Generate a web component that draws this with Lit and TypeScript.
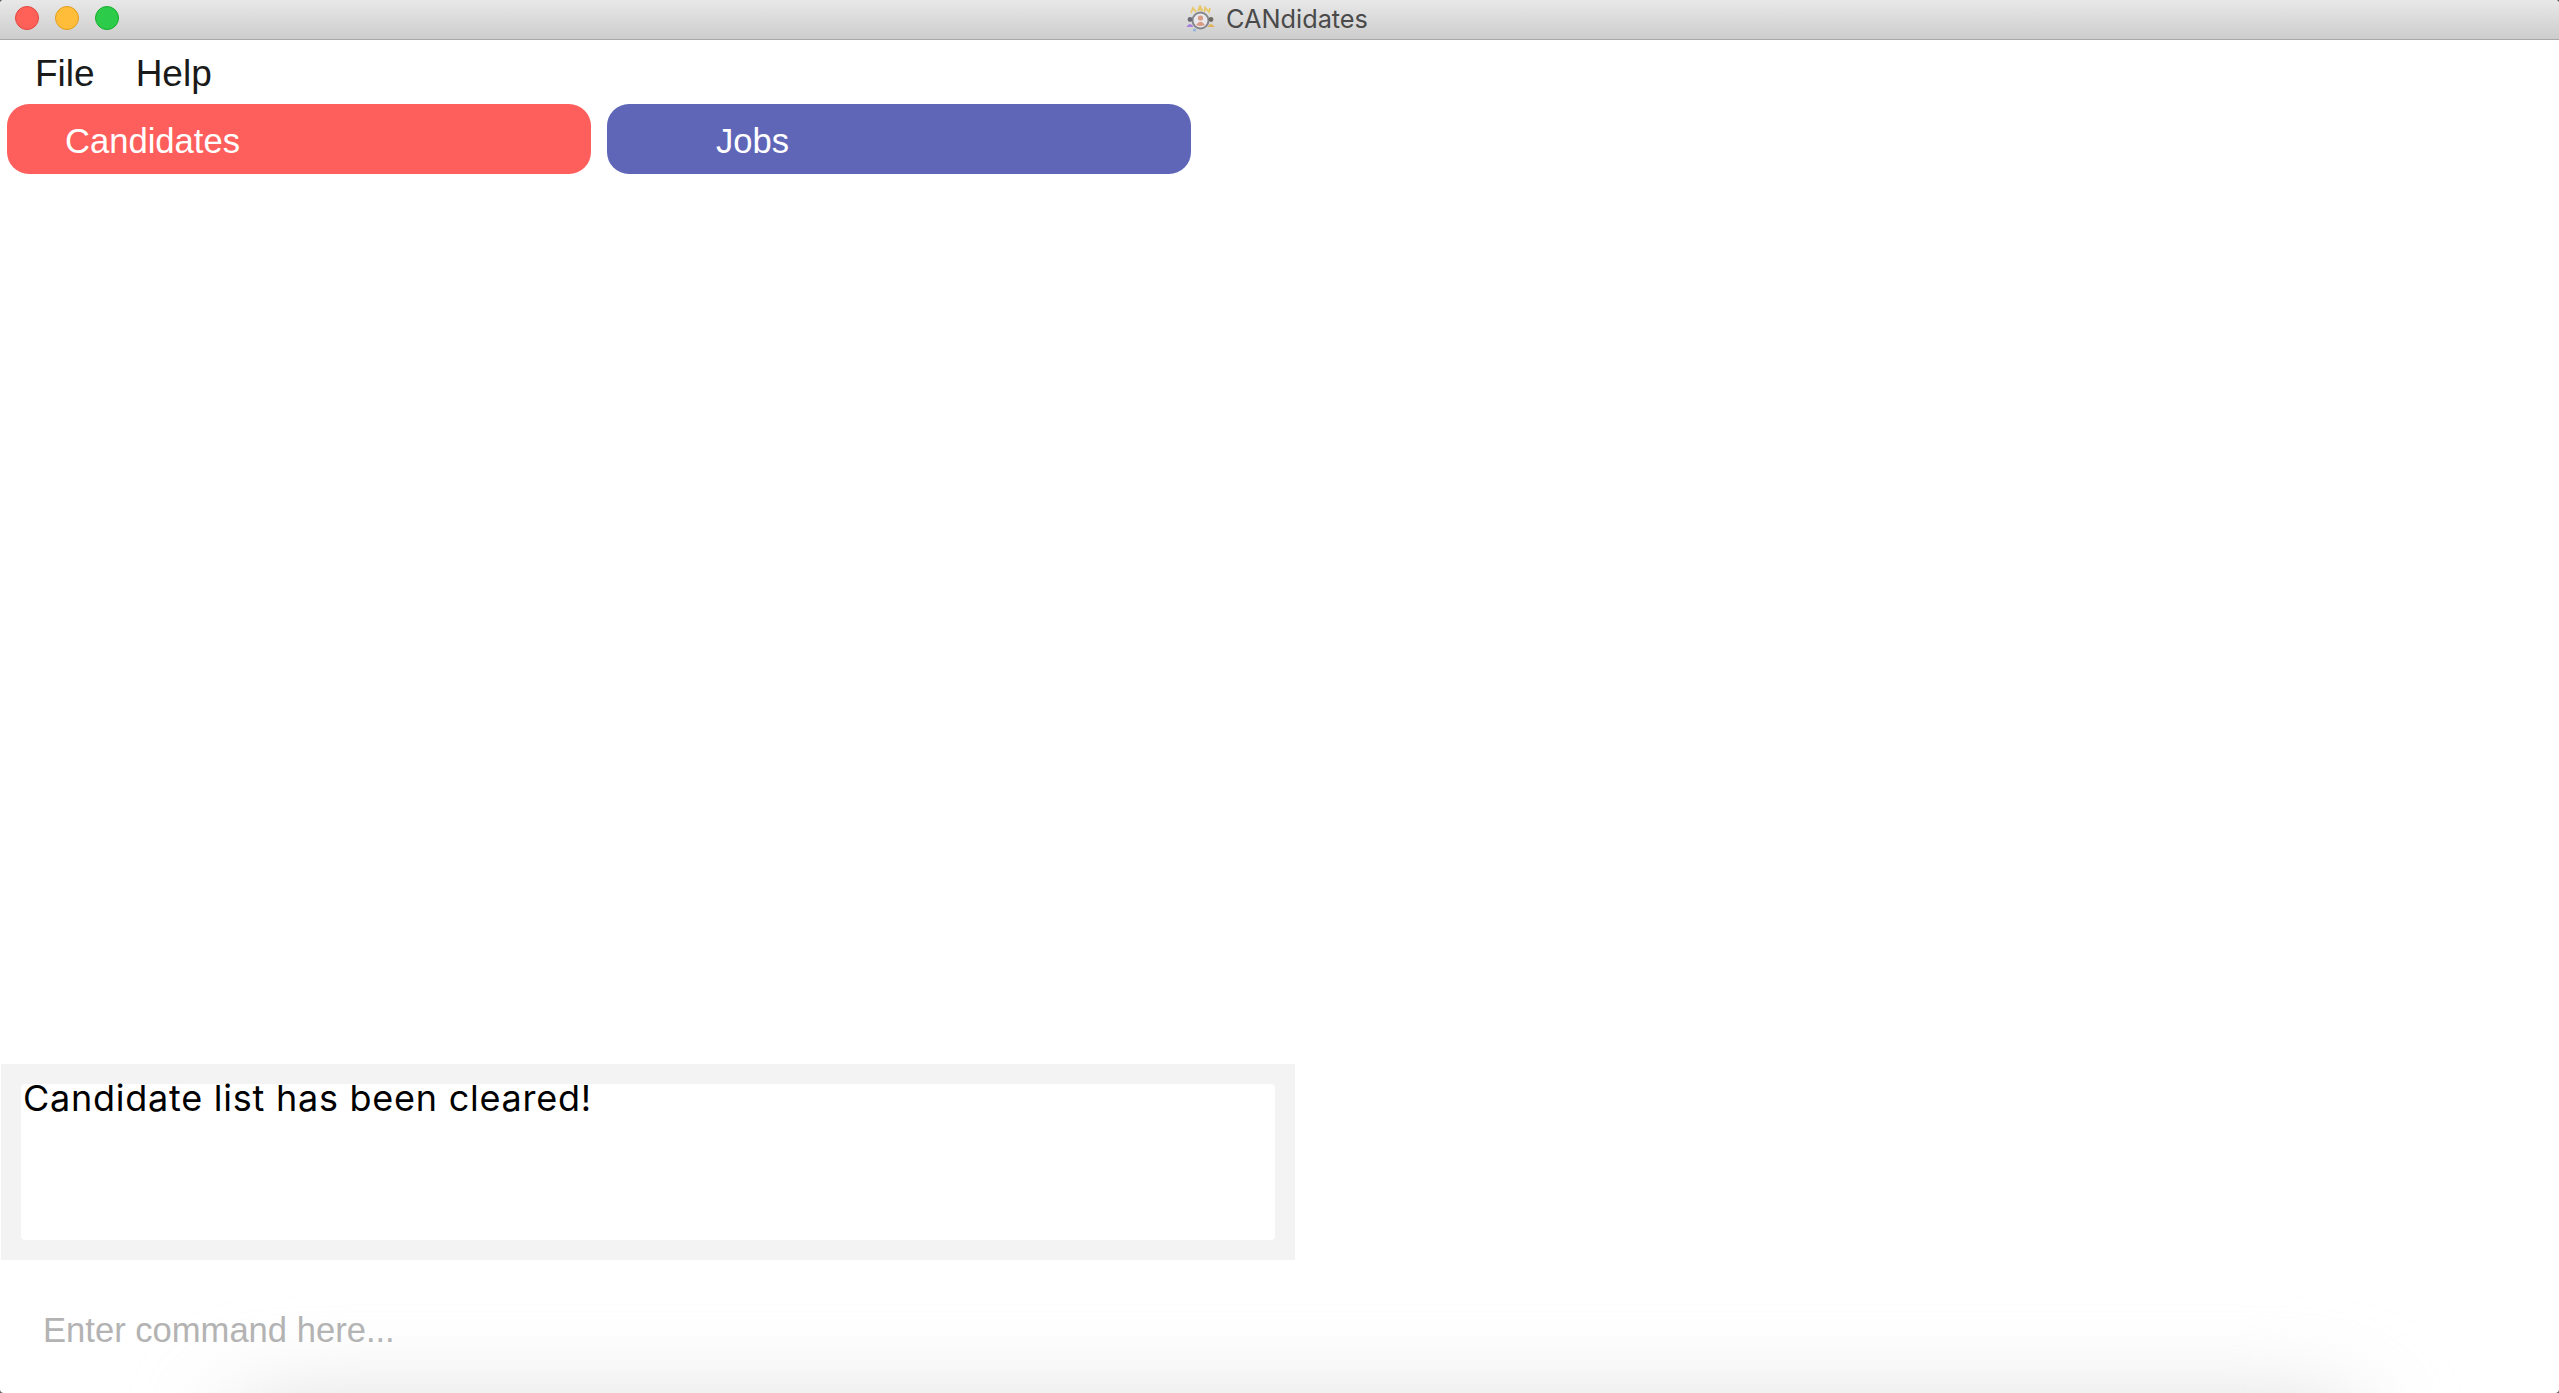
import { LitElement, html, css } from "lit";
import { customElement } from "lit/decorators.js";

@customElement("app-root")
export class AppRoot extends LitElement {
  static styles = css`
    :host {
      display: block;
      width: 2559px;
      height: 1393px;
      overflow: hidden;
      background: #5a5a60;
      font-family: "Liberation Sans", Arial, sans-serif;
    }
    .window {
      display: flex;
      flex-direction: column;
      height: 100%;
      position: relative;
      overflow: hidden;
      background: #ffffff;
      border-radius: 4px;
    }
    .titlebar {
      flex: none;
      height: 39px;
      display: grid;
      grid-template-columns: 1fr auto 1fr;
      align-items: center;
      background: linear-gradient(#e8e8e8, #cdcdcd);
      border-bottom: 1px solid #a9a9a9;
    }
    .lights { display: flex; gap: 16px; padding-left: 15px; padding-bottom: 3px; }
    .light { width: 24px; height: 24px; border-radius: 50%; box-sizing: border-box; border: 1px solid; }
    .red { background: #ff6159; border-color: #e2463f; }
    .amber { background: #ffbd3a; border-color: #e09e1a; }
    .green { background: #2ccb4a; border-color: #14ae2a; }
    .title { display: flex; align-items: center; gap: 11px; font-family: Inter, sans-serif; font-size: 25.3px; color: #4a4a4a; padding-bottom: 2px; padding-right: 5px; }
    .title svg { display: block; }
    .menu { flex: none; height: 64px; display: flex; align-items: center; padding-left: 35px; padding-top: 3px; box-sizing: border-box; gap: 41px; font-size: 37px; color: #1a1a1a; }
    .tabs { flex: none; height: 70px; display: flex; gap: 16px; padding-left: 7px; }
    .tab { width: 584px; height: 70px; border-radius: 22px; color: #fff; font-size: 34.6px; display: flex; align-items: center; padding-top: 5px; box-sizing: border-box; }
    .tab.cand { background: #ff5f5c; padding-left: 58px; }
    .tab.jobs { background: #5f66b8; padding-left: 109px; }
    .spacer { flex: 1; }
    .result { flex: none; box-sizing: border-box; width: 1294px; height: 196px; margin-left: 1px; padding: 20px; background: #f3f3f3; }
    .result-inner { height: 156px; background: #fff; border-radius: 4px; font-family: Inter, sans-serif; font-size: 36px; letter-spacing: 0.75px; line-height: 28px; color: #000; padding-left: 2px; box-sizing: border-box; }
    .command { flex: none; height: 133px; display: flex; align-items: center; padding-left: 43px; padding-top: 7px; box-sizing: border-box; font-size: 34.6px; color: #b3b3b3; position: relative; z-index: 1; }
    .shade { position: absolute; left: 240px; width: 2110px; top: 1415px; height: 200px; background: #d2d2d2; filter: blur(50px); }
  `;

  render() {
    return html`
      <div class="window">
        <div class="titlebar">
          <div class="lights">
            <span class="light red"></span><span class="light amber"></span><span class="light green"></span>
          </div>
          <div class="title">
            <svg width="29" height="27" viewBox="0 0 29 27" aria-hidden="true">
              <path d="M5 8 L7 3 L10 7 M12 6 L14 1 L16.5 6 M13 4.5 H15.5 M18.5 7 L19 2.5 L23 7 L24 3" fill="none" stroke="#e8c66a" stroke-width="1.8" />
              <circle cx="14.5" cy="15.5" r="8" fill="#e8e8ec" stroke="#85858c" stroke-width="2" />
              <circle cx="14.5" cy="13" r="2.6" fill="#d99b84" />
              <path d="M10 20 Q14.5 13.5 19 20 Q14.5 22 10 20 Z" fill="#d99b84" />
              <circle cx="4" cy="14.5" r="2.4" fill="#6e6a78" />
              <path d="M0.5 22 Q4 16 7.5 22 Z" fill="#a97fdc" />
              <circle cx="25" cy="14.5" r="2.4" fill="#6e6a60" />
              <path d="M21.5 22 Q25 16 28.5 22 Z" fill="#e0b45c" />
              <circle cx="8.5" cy="25" r="1.6" fill="#8fb3dc" />
            </svg>
            <span>CANdidates</span>
          </div>
          <div></div>
        </div>
        <div class="menu"><span>File</span><span>Help</span></div>
        <div class="tabs">
          <div class="tab cand">Candidates</div>
          <div class="tab jobs">Jobs</div>
        </div>
        <div class="spacer"></div>
        <div class="result"><div class="result-inner">Candidate list has been cleared!</div></div>
        <div class="command">Enter command here...</div>
        <div class="shade"></div>
      </div>
    `;
  }
}
